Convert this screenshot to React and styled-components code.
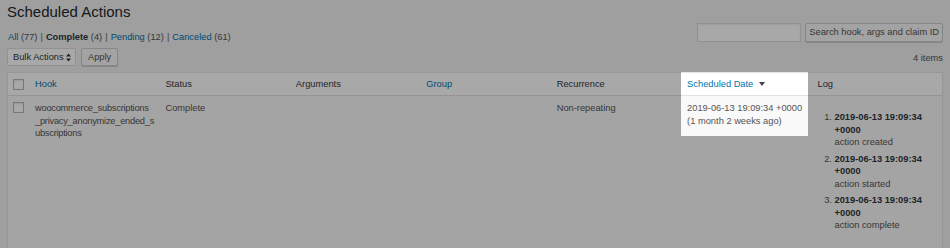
import React from 'react'
import styled, { createGlobalStyle } from 'styled-components'

const GlobalStyle = createGlobalStyle`
    html, body {
        margin: 0;
        padding: 0;
        background: #f1f1f1;
        font-family: "Liberation Sans", Arial, sans-serif;
        color: #555;
        overflow: hidden;
    }
`

const Page = styled.div`
    padding: 0 7px;
    font-size: 9.3px;
    line-height: 12.5px;
`

const Title = styled.h1`
    margin: 0;
    padding-top: 1px;
    height: 22px;
    font-size: 15px;
    line-height: 22px;
    font-weight: 400;
    color: #23282d;
`

const TopRow = styled.div`
    display: flex;
    justify-content: space-between;
    align-items: flex-start;
    height: 20px;
`

const Filters = styled.ul`
    display: flex;
    margin: 0;
    padding: 8px 0 0 1px;
    list-style: none;
    color: #555;
`

const Filter = styled.li`
    white-space: pre;
    a {
        color: ${props => props.current ? '#32373c' : '#0073aa'};
        font-weight: ${props => props.current ? 600 : 400};
        text-decoration: none;
    }
`

const Sep = styled.span`
    color: #666;
    padding: 0 3px;
`

const SearchBox = styled.div`
    display: flex;
    gap: 4px;
`

const SearchInput = styled.div`
    width: 102px;
    height: 17px;
    background: #fff;
    border: 1px solid #ddd;
    box-shadow: inset 0 1px 2px rgba(0, 0, 0, 0.07);
`

const Button = styled.div`
    display: flex;
    align-items: center;
    justify-content: center;
    box-sizing: border-box;
    height: ${props => props.tall ? '19px' : '18px'};
    padding: 0 ${props => props.tall ? '3px' : '6px'};
    background: #f7f7f7;
    border: 1px solid #ccc;
    border-radius: 2px;
    box-shadow: 0 1px 0 #ccc;
    color: #555;
    white-space: nowrap;
`

const TableNav = styled.div`
    display: flex;
    justify-content: space-between;
    align-items: center;
    margin-top: 5px;
    height: 18px;
`

const Actions = styled.div`
    display: flex;
    gap: 5px;
`

const Select = styled.div`
    display: flex;
    align-items: center;
    justify-content: space-between;
    box-sizing: border-box;
    height: 18px;
    width: 69px;
    padding: 0 4px 0 5px;
    background: #fff;
    border: 1px solid #ddd;
    border-radius: 2px;
    color: #32373c;
    white-space: nowrap;
`

const Count = styled.span`
    color: #555;
    padding-top: 3px;
`

const Table = styled.table`
    margin-top: 6px;
    width: 100%;
    table-layout: fixed;
    border-spacing: 0;
    background: #fff;
    border: 1px solid #e5e5e5;
    box-shadow: 0 1px 1px rgba(0, 0, 0, 0.04);
`

const Th = styled.th`
    position: relative;
    height: 22px;
    padding: 0 6px;
    text-align: left;
    font-weight: 400;
    color: ${props => props.link ? '#0073aa' : '#32373c'};
    border-bottom: 1px solid #e1e1e1;
    padding-left: ${props => props.check ? '5px' : '6px'};
    white-space: nowrap;
`

const Td = styled.td`
    vertical-align: top;
    padding: ${props => props.check ? '6px 0 6px 5px' : '6px 6px'};
    color: #555;
`

const HookName = styled(Td)`
    letter-spacing: -0.25px;
    padding-right: 2px;
`

const Row = styled.tr`
    background: #f9f9f9;
`

const Checkbox = styled.span`
    display: block;
    box-sizing: border-box;
    width: 11px;
    height: 11px;
    background: #fff;
    border: 1px solid #b4b9be;
    box-shadow: inset 0 1px 2px rgba(0, 0, 0, 0.1);
`

const HeadBox = styled(Checkbox)`
    margin-top: 1px;
`

const SortArrow = styled.span`
    display: inline-block;
    margin-left: 6px;
    vertical-align: 1px;
    width: 0;
    height: 0;
    border-left: 3px solid transparent;
    border-right: 3px solid transparent;
    border-top: 4px solid #444;
`

const Spotlight = styled.div`
    position: absolute;
    top: -1px;
    left: 0;
    width: 127px;
    height: 64px;
    z-index: 10;
    box-shadow: 0 0 0 2000px rgba(0, 0, 0, 0.34);
    pointer-events: none;
`

const LogList = styled.ol`
    margin: 9px 0 10px;
    padding-left: 17px;
`

const LogItem = styled.li`
    margin-bottom: 4px;
    strong {
        color: #32373c;
        font-weight: 700;
    }
`

const UpDown = () => (
    <svg width="5" height="9" viewBox="0 0 5 9">
        <path d="M2.5 0.5 L5 3.5 H0 Z M2.5 8.5 L0 5.5 H5 Z" fill="#32373c" />
    </svg>
)

const logEntries = ['action created', 'action started', 'action complete']

export default function App() {
    return (
        <>
            <GlobalStyle />
            <Page>
                <Title>Scheduled Actions</Title>
                <TopRow>
                    <Filters>
                        <Filter><a>All</a> (77)<Sep>|</Sep></Filter>
                        <Filter current><a>Complete</a> (4)<Sep>|</Sep></Filter>
                        <Filter><a>Pending</a> (12)<Sep>|</Sep></Filter>
                        <Filter><a>Canceled</a> (61)</Filter>
                    </Filters>
                    <SearchBox>
                        <SearchInput />
                        <Button tall>Search hook, args and claim ID</Button>
                    </SearchBox>
                </TopRow>
                <TableNav>
                    <Actions>
                        <Select>Bulk Actions <UpDown /></Select>
                        <Button>Apply</Button>
                    </Actions>
                    <Count>4 items</Count>
                </TableNav>
                <Table>
                    <colgroup>
                        <col style={{ width: '21px' }} />
                        <col /><col /><col /><col /><col /><col /><col />
                    </colgroup>
                    <thead>
                        <tr>
                            <Th check><HeadBox /></Th>
                            <Th link>Hook</Th>
                            <Th>Status</Th>
                            <Th>Arguments</Th>
                            <Th link>Group</Th>
                            <Th>Recurrence</Th>
                            <Th link>
                                Scheduled Date<SortArrow />
                                <Spotlight />
                            </Th>
                            <Th>Log</Th>
                        </tr>
                    </thead>
                    <tbody>
                        <Row>
                            <Td check><Checkbox /></Td>
                            <HookName>woocommerce_subscriptions<wbr />_privacy_anonymize_ended_s<wbr />ubscriptions</HookName>
                            <Td>Complete</Td>
                            <Td></Td>
                            <Td></Td>
                            <Td>Non-repeating</Td>
                            <Td>2019-06-13 19:09:34 +0000<br />(1 month 2 weeks ago)</Td>
                            <Td>
                                <LogList>
                                    {logEntries.map(entry => (
                                        <LogItem key={entry}>
                                            <strong>2019-06-13 19:09:34 +0000</strong><br />{entry}
                                        </LogItem>
                                    ))}
                                </LogList>
                            </Td>
                        </Row>
                    </tbody>
                </Table>
            </Page>
        </>
    )
}
